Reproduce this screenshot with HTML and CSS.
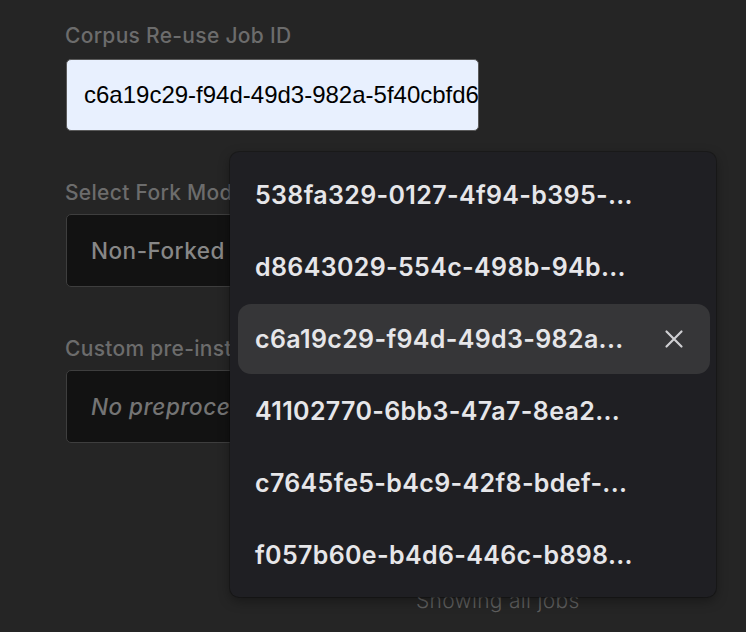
FILE: index.html
```html
<!DOCTYPE html>
<html>
<head>
<meta charset="utf-8">
<link rel="stylesheet" href="styles.css">
</head>
<body>
<div class="page">
  <div class="form">
    <div class="field">
      <div class="label">Corpus Re-use Job ID</div>
      <div class="input filled">c6a19c29-f94d-49d3-982a-5f40cbfd6a11</div>
    </div>
    <div class="field">
      <div class="label">Select Fork Mode</div>
      <div class="input dark">Non-Forked</div>
    </div>
    <div class="field">
      <div class="label">Custom pre-install script</div>
      <div class="input dark italic">No preprocessing script</div>
    </div>
    <div class="footer">Showing all jobs</div>
  </div>

  <div class="popup">
    <div class="item">538fa329-0127-4f94-b395-...</div>
    <div class="item">d8643029-554c-498b-94b...</div>
    <div class="item active"><span>c6a19c29-f94d-49d3-982a...</span>
      <svg class="close" width="20" height="20" viewBox="0 0 20 20"><path d="M2.5 2.5 L17.5 17.5 M17.5 2.5 L2.5 17.5" stroke="#cfcfd2" stroke-width="2.2" stroke-linecap="round"/></svg>
    </div>
    <div class="item">41102770-6bb3-47a7-8ea2...</div>
    <div class="item">c7645fe5-b4c9-42f8-bdef-...</div>
    <div class="item">f057b60e-b4d6-446c-b898...</div>
  </div>
</div>
</body>
</html>
```

FILE: styles.css
```css
html, body {
  margin: 0;
  padding: 0;
  background: #252525;
}
.page {
  position: relative;
  width: 746px;
  height: 632px;
  overflow: hidden;
  font-family: Inter, "Noto Sans", sans-serif;
}
.form {
  padding: 24px 0 0 65px;
  display: flex;
  flex-direction: column;
}
.field {
  display: flex;
  flex-direction: column;
  margin-bottom: 50px;
}
.label {
  font-size: 21px;
  line-height: 24px;
  font-weight: 500;
  color: #6c6c6c;
  letter-spacing: 0.3px;
  margin-bottom: 9px;
  white-space: nowrap;
}
.field:first-child .label {
  margin-bottom: 11px;
}
.input {
  box-sizing: border-box;
  width: 413px;
  height: 73px;
  border-radius: 5px;
  display: flex;
  align-items: center;
  white-space: nowrap;
  overflow: hidden;
  margin-left: 1px;
}
.filled {
  background: #e8f0fe;
  border: 1px solid #5a5a5a;
  color: #000;
  font-family: "Liberation Sans", Arial, sans-serif;
  font-size: 24px;
  padding-left: 17px;
  height: 72px;
}
.dark {
  background: #121212;
  border: 1px solid #3e3e3e;
  color: #878787;
  font-size: 22.5px;
  font-weight: 500;
  letter-spacing: 0.5px;
  padding-left: 24px;
}
.italic {
  font-style: italic;
  color: #747474;
}
.footer {
  margin-top: 95px;
  padding-left: 351px;
  font-size: 21px;
  font-weight: 300;
  color: #5e5e5e;
  letter-spacing: 0.3px;
}
.popup {
  position: absolute;
  left: 230px;
  top: 152px;
  width: 486px;
  box-sizing: border-box;
  padding: 8px 6px 7px 8px;
  background: #1f1f23;
  border-radius: 9px;
  box-shadow: 0 0 0 1px rgba(0,0,0,0.25), 0 4px 12px rgba(0,0,0,0.35);
  display: flex;
  flex-direction: column;
  gap: 2px;
}
.item {
  height: 70px;
  box-sizing: border-box;
  padding: 0 26px 0 17px;
  display: flex;
  align-items: center;
  justify-content: space-between;
  font-size: 25px;
  font-weight: 600;
  color: #e6e6e9;
  letter-spacing: 0.35px;
  border-radius: 13px;
  white-space: nowrap;
}
.item.active {
  background: #363638;
}
.close {
  flex: none;
}
```
